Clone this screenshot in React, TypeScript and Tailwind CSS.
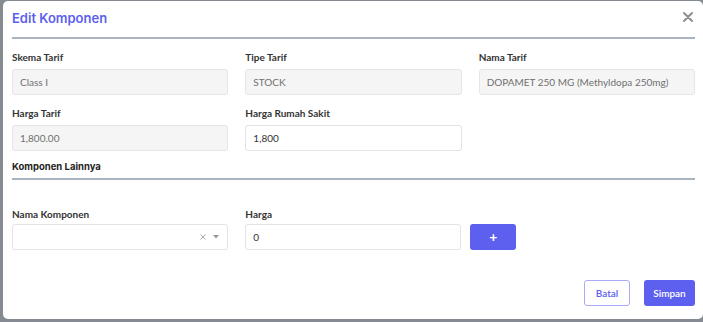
import React from 'react'

const label = 'block h-[14px] mb-[5px] text-[10px] leading-[14px] font-bold text-[#333]'
const label3 = 'block h-[14px] mb-[3px] text-[10px] leading-[14px] font-bold text-[#333]'
const roInput =
  'block w-full h-[26px] rounded-[3px] border border-[#e6e6e6] bg-[#f5f5f5] px-[7px] text-[10px] text-[#707070] outline-none'
const input =
  'block w-full h-[26px] rounded-[3px] border border-[#e3e3e3] bg-white px-[7px] text-[10px] text-[#333] outline-none'

export default function App() {
  return (
    <div
      className="w-[703px] h-[322px] overflow-hidden bg-[#858b91] pl-[3px] pt-[1px]"
      style={{ fontFamily: 'Lato, "Noto Sans", sans-serif' }}
    >
      <div className="w-[700px] h-[318px] bg-white rounded-[5px] pl-[9px] pr-[8px]">
        {/* header */}
        <div className="flex items-center justify-between h-[36px] border-b-2 border-[#aab4be] box-content">
          <h2 className="text-[13px] font-semibold text-[#5d5fef]" style={{ fontFamily: 'Inter, sans-serif' }}>
            Edit Komponen
          </h2>
          <svg width="10" height="10" viewBox="0 0 10 10" className="mr-[2px] -mt-[4px]">
            <path d="M1 1L9 9M9 1L1 9" stroke="#8a8a8a" strokeWidth="1.8" strokeLinecap="round" />
          </svg>
        </div>

        {/* body */}
        <div className="grid grid-cols-3 gap-x-[17px] gap-y-[11px] pt-[11px]">
          <div>
            <span className={label}>Skema Tarif</span>
            <input className={roInput} readOnly value="Class I" />
          </div>
          <div>
            <span className={label}>Tipe Tarif</span>
            <input className={roInput} readOnly value="STOCK" />
          </div>
          <div>
            <span className={label}>Nama Tarif</span>
            <input className={roInput} readOnly value="DOPAMET 250 MG (Methyldopa 250mg)" />
          </div>
          <div>
            <span className={label}>Harga Tarif</span>
            <input className={roInput} readOnly value="1,800.00" />
          </div>
          <div>
            <span className={label}>Harga Rumah Sakit</span>
            <input className={input} readOnly value="1,800" />
          </div>
        </div>

        <div className="mt-[8px] pb-[3px] border-b-2 border-[#aab4be]">
          <h3
            className="h-[16px] leading-[16px] text-[9.5px] font-bold text-[#222]"
            style={{ fontFamily: 'Inter, sans-serif' }}
          >
            Komponen Lainnya
          </h3>
        </div>

        <div className="grid grid-cols-3 gap-x-[17px] pt-[27px]">
          <div>
            <span className={label3}>Nama Komponen</span>
            <div className="flex items-center justify-end h-[26px] rounded-[3px] border border-[#e3e3e3] bg-white pr-[8px] gap-[7px]">
              <svg width="6" height="6" viewBox="0 0 6 6">
                <path d="M0.5 0.5L5.5 5.5M5.5 0.5L0.5 5.5" stroke="#aaa" strokeWidth="1" />
              </svg>
              <svg width="6" height="4" viewBox="0 0 6 4">
                <path d="M0 0H6L3 3.5Z" fill="#999" />
              </svg>
            </div>
          </div>
          <div className="col-span-2 flex items-end gap-[9px]">
            <div className="w-[216px]">
              <span className={label3}>Harga</span>
              <input className={input} readOnly value="0" />
            </div>
            <button className="w-[46px] h-[26px] rounded-[3px] bg-[#5d5fef] text-white text-[14px] font-bold leading-none">
              +
            </button>
          </div>
        </div>

        <div className="flex justify-end gap-[14px] pt-[30px]">
          <button className="w-[46px] h-[26px] rounded-[3px] border border-[#a9abf6] bg-white text-[10px] font-semibold text-[#5d5fef]">
            Batal
          </button>
          <button className="w-[51px] h-[26px] rounded-[3px] bg-[#5d5fef] text-[10px] font-semibold text-white">
            Simpan
          </button>
        </div>
      </div>
    </div>
  )
}
